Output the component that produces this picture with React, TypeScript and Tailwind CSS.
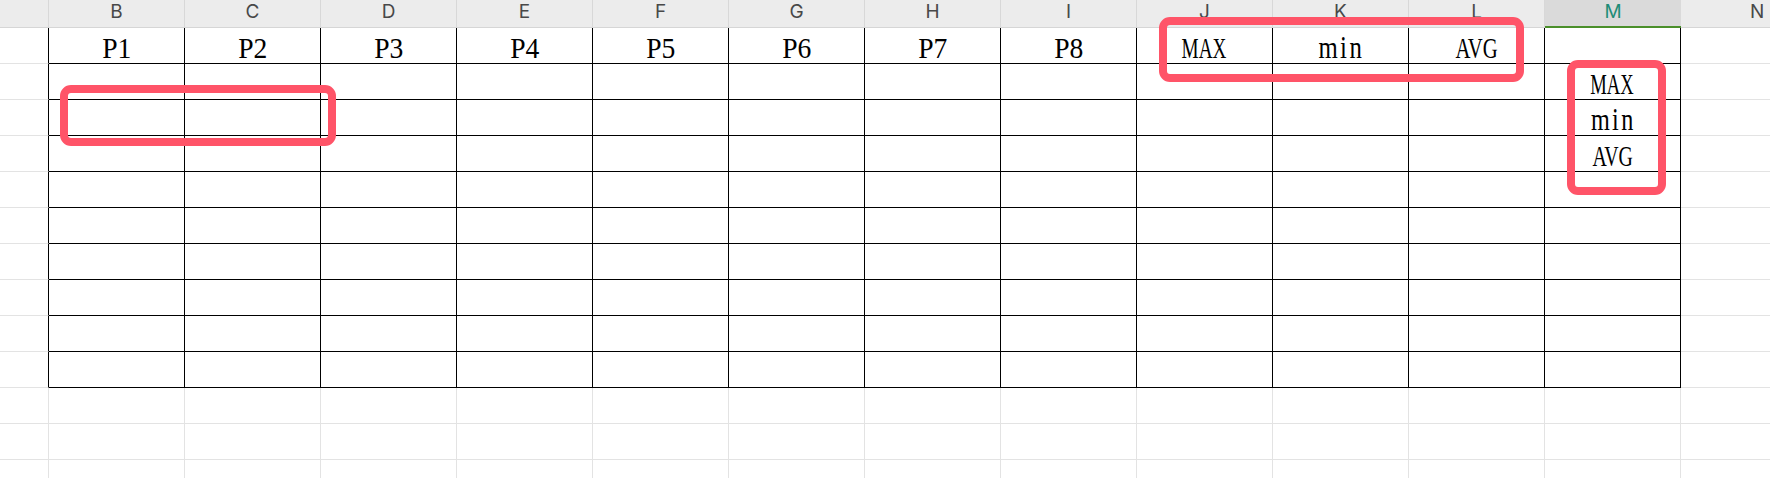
import React from 'react';

// sheet columns shown (A is cut off on the left, N on the right)
const cols = ['B', 'C', 'D', 'E', 'F', 'G', 'H', 'I', 'J', 'K', 'L', 'M'];

type Label = { text: string; look: string };

const firstRow: Label[] = [
  { text: 'P1', look: 'text-[30px] scale-x-[0.92]' },
  { text: 'P2', look: 'text-[30px] scale-x-[0.92]' },
  { text: 'P3', look: 'text-[30px] scale-x-[0.92]' },
  { text: 'P4', look: 'text-[30px] scale-x-[0.92]' },
  { text: 'P5', look: 'text-[30px] scale-x-[0.92]' },
  { text: 'P6', look: 'text-[30px] scale-x-[0.92]' },
  { text: 'P7', look: 'text-[30px] scale-x-[0.92]' },
  { text: 'P8', look: 'text-[30px] scale-x-[0.92]' },
  { text: 'MAX', look: 'text-[30px] scale-x-[0.64]' },
  { text: 'min', look: 'text-[31px] tracking-[3px] pl-[3px] scale-x-[0.8]' },
  { text: 'AVG', look: 'text-[30px] scale-x-[0.69]' },
  { text: '', look: '' },
];

// column M, rows 2-4
const sideLabels: Record<number, Label> = {
  2: { text: 'MAX', look: 'text-[30px] scale-x-[0.62]' },
  3: { text: 'min', look: 'text-[31px] tracking-[3px] pl-[3px] scale-x-[0.78]' },
  4: { text: 'AVG', look: 'text-[30px] scale-x-[0.66]' },
};

const rows = Array.from({ length: 13 }, (_, i) => i + 1);

const CellText = ({ text, look }: Label) => (
  <span className={`inline-block font-['Liberation_Serif',serif] leading-none text-black ${look}`}>
    {text}
  </span>
);

const HeaderRow = () => (
  <div className="flex h-[28px] bg-[#ececec] font-['Inter','Noto_Sans',sans-serif] text-[19px] text-[#484848]">
    <div className="w-[49px] shrink-0 border-r border-b border-r-[#d8d8d8] border-b-[#d6d6d6]" />
    {cols.map((c) =>
      c === 'M' ? (
        <div
          key={c}
          className="flex w-[136px] shrink-0 items-center justify-center border-b-2 border-b-[#4a8f2a] bg-[#dadada] pb-[2px] text-[#1e8c76]"
        >
          {c}
        </div>
      ) : (
        <div
          key={c}
          className="flex w-[136px] shrink-0 items-center justify-center border-r border-b border-r-[#d8d8d8] border-b-[#d6d6d6] pb-[3px]"
        >
          {c}
        </div>
      )
    )}
    <div className="flex flex-1 items-center border-b border-b-[#d6d6d6] pb-[3px] pl-[69px]">N</div>
  </div>
);

const SheetRow = ({ r }: { r: number }) => {
  const inTable = r <= 10;
  return (
    <div className="flex h-[36px]">
      <div
        className={`w-[49px] shrink-0 border-r border-b border-b-[#e3e3e3] ${inTable ? 'border-r-black' : 'border-r-[#e3e3e3]'}`}
      />
      {cols.map((c, ci) => {
        let label: Label | null = null;
        if (r === 1) label = firstRow[ci];
        if (c === 'M' && sideLabels[r]) label = sideLabels[r];
        return (
          <div
            key={c}
            className={`flex w-[136px] shrink-0 items-center justify-center border-r border-b pt-[4px] ${
              inTable ? 'border-black' : 'border-[#e3e3e3]'
            }`}
          >
            {label && label.text && <CellText text={label.text} look={label.look} />}
          </div>
        );
      })}
      <div className="flex-1 border-b border-b-[#e3e3e3]" />
    </div>
  );
};

export default function App() {
  return (
    <div className="relative h-[478px] w-[1770px] overflow-hidden bg-white">
      <HeaderRow />
      {rows.map((r) => (
        <SheetRow key={r} r={r} />
      ))}

      {/* red annotation frames */}
      <div className="absolute left-[60px] top-[85px] h-[61px] w-[276px] rounded-[11px] border-[8px] border-[#ff5468]" />
      <div className="absolute left-[1159px] top-[17px] h-[65px] w-[365px] rounded-[11px] border-[8px] border-[#ff5468]" />
      <div className="absolute left-[1567px] top-[60px] h-[135px] w-[99px] rounded-[11px] border-[8px] border-[#ff5468]" />
    </div>
  );
}
